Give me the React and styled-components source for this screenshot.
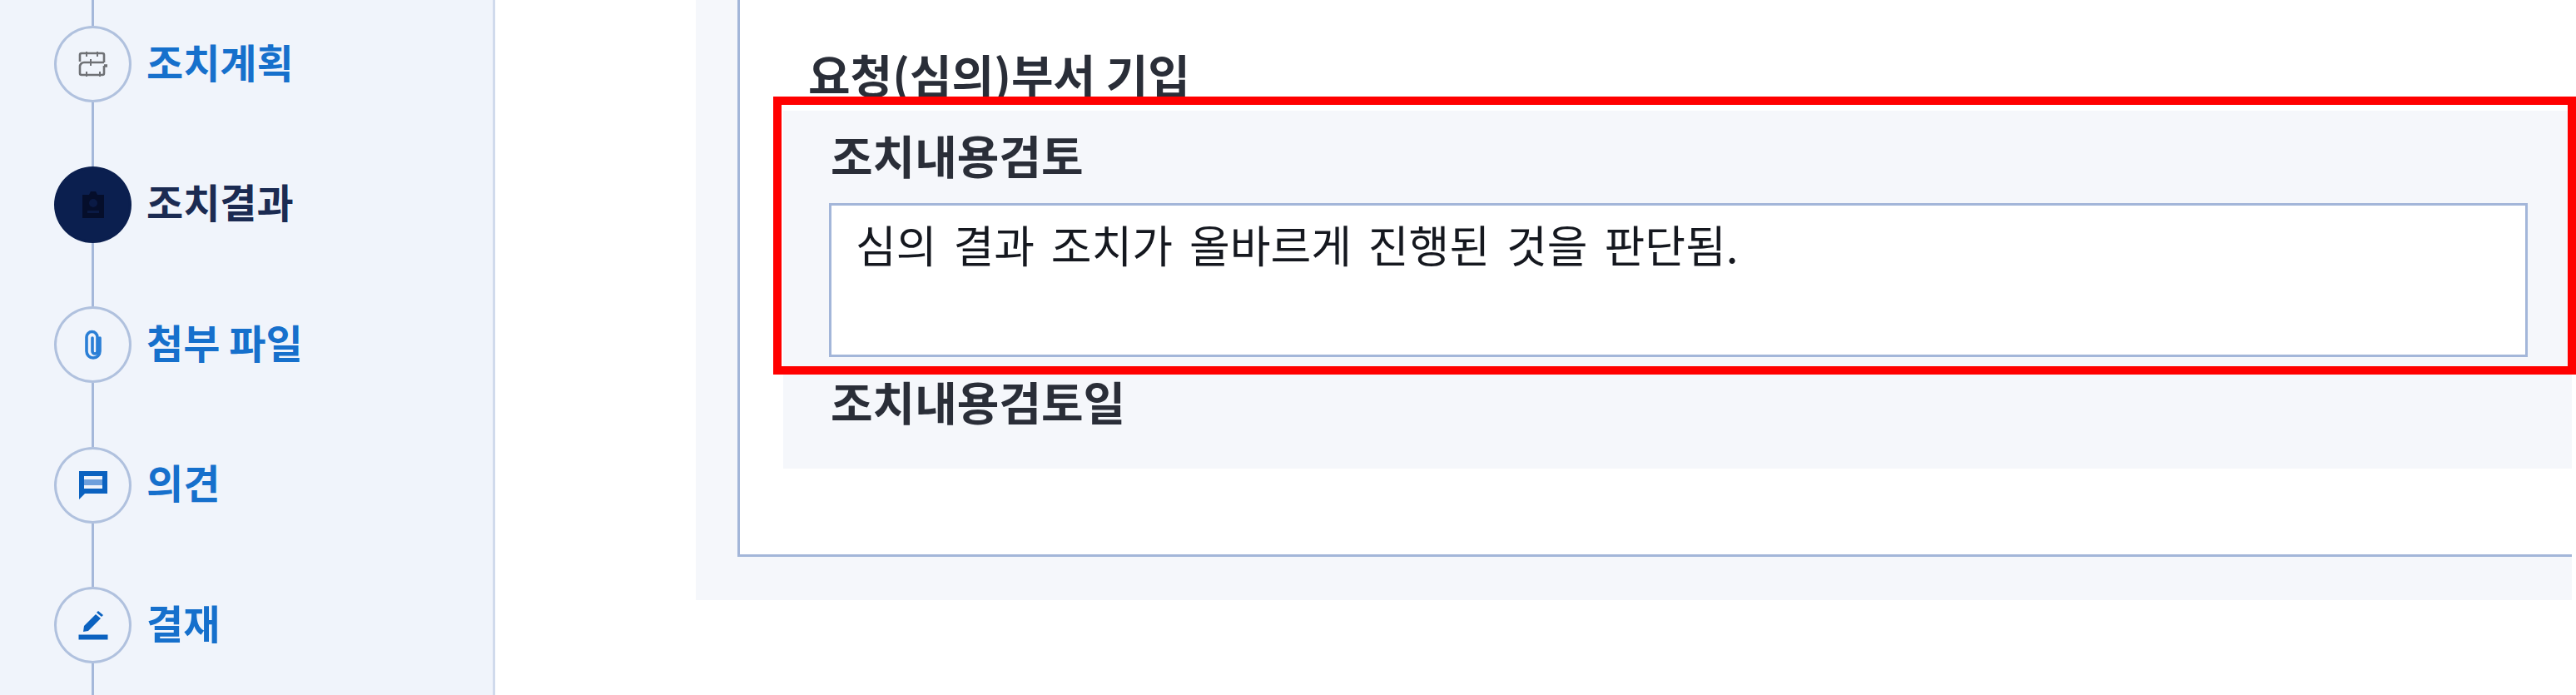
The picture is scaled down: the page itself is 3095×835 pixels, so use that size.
import React from "react";
import styled, { createGlobalStyle } from "styled-components";

const Global = createGlobalStyle`
  html, body { margin: 0; padding: 0; background: #fff; }
  body { font-family: "Noto Sans CJK KR", "Noto Sans", sans-serif; }
`;

const Page = styled.div`
  position: relative;
  display: flex;
  width: 3095px;
  height: 835px;
  overflow: hidden;
  background: #fff;
`;

const Sidebar = styled.aside`
  box-sizing: border-box;
  flex: 0 0 595px;
  height: 835px;
  padding-left: 65px;
  background: #f0f4fb;
  border-right: 3px solid #d0daec;
  display: flex;
  flex-direction: column;
  filter: blur(0.7px);
`;

const Connector = styled.div`
  flex: 0 0 ${(p) => p.$h}px;
  width: 3px;
  margin-left: 45px;
  background: #a5b8da;
`;

const Step = styled.div`
  flex: 0 0 92px;
  display: flex;
  align-items: center;
  gap: 18px;
`;

const Node = styled.div`
  box-sizing: border-box;
  flex: 0 0 93px;
  height: 92px;
  border-radius: 50%;
  border: 3px solid ${(p) => (p.$active ? "#0b1f4f" : "#b0c1de")};
  background: ${(p) => (p.$active ? "#0b1f4f" : "transparent")};
  display: flex;
  align-items: center;
  justify-content: center;
`;

const StepLabel = styled.span`
  font-size: 48px;
  font-weight: 700;
  line-height: 1;
  margin-top: -9px;
  white-space: nowrap;
  color: ${(p) => (p.$active ? "#1b2b52" : "#1670cc")};
`;

const Main = styled.main`
  flex: 1;
  min-width: 0;
  padding-left: 241px;
  padding-right: 5px;
  filter: blur(0.7px);
`;

const Panel = styled.section`
  height: 721px;
  padding-left: 50px;
  background: #f5f7fb;
`;

const Box = styled.div`
  box-sizing: border-box;
  height: 669px;
  padding-left: 52px;
  background: #fff;
  border-left: 3px solid #a3b6d9;
  border-bottom: 3px solid #a3b6d9;
`;

const Heading = styled.h2`
  margin: 0;
  height: 133px;
  padding: 56px 0 0 30px;
  box-sizing: border-box;
  font-size: 55px;
  font-weight: 700;
  line-height: 64px;
  color: #2a2e38;
  white-space: nowrap;
`;

const Section = styled.div`
  box-sizing: border-box;
  height: 430px;
  padding: 20px 51px 0 57px;
  background: #f5f7fb;
`;

const FieldLabel = styled.div`
  height: 91px;
  font-size: 55px;
  font-weight: 700;
  line-height: 64px;
  color: #2a2e38;
  white-space: nowrap;
`;

const Field = styled.div`
  box-sizing: border-box;
  height: 185px;
  margin: 0 2px 20px -2px;
  padding: 14px 29px;
  background: #fff;
  border: 3px solid #a3b6d9;
  font-size: 53px;
  line-height: 64px;
  word-spacing: 8px;
  color: #15181f;
  white-space: nowrap;
`;

const Highlight = styled.div`
  position: absolute;
  left: 929px;
  top: 116px;
  box-sizing: border-box;
  width: 2166px;
  height: 334px;
  border: 10px solid #ff0000;
  pointer-events: none;
`;

const FlowIcon = () => (
  <svg width="36" height="30" viewBox="0 0 36 30" fill="none" stroke="#6f7175" strokeWidth="2.600">
    <path d="M2 12V4a2 2 0 0 1 2-2h25a2 2 0 0 1 2 2v9" />
    <path d="M31 13H7a5 5 0 0 0-5 5v8a2 2 0 0 0 2 2h25a2 2 0 0 0 2-2v-9" />
    <path d="M10 0v6M23 0v6M15 9v8M26 24v6M10 24v6" strokeWidth="2" />
    <path d="M31 17h4" strokeWidth="3.500" />
  </svg>
);

const ClipboardIcon = () => (
  <svg width="28" height="32" viewBox="0 0 28 32" fill="#050e2b">
    <path d="M1 4h8l2-4h6l2 4h8v28H1z" />
    <circle cx="14" cy="14" r="5" fill="#0a1a45" />
    <rect x="7" y="23" width="14" height="3" fill="#0a1a45" />
  </svg>
);

const ClipIcon = () => (
  <svg width="22" height="36" viewBox="0 0 22 36" fill="none" stroke="#2b7fd6" strokeWidth="3.600" strokeLinecap="round">
    <path d="M19 10v16a8 8 0 0 1-8 8 8 8 0 0 1-8-8V9a6.500 6.500 0 0 1 13 0v17a3 3 0 0 1-6 0V10" />
  </svg>
);

const ChatIcon = () => (
  <svg width="36" height="35" viewBox="0 0 36 35">
    <path d="M1 1h34v27H8l-7 7z" fill="#0b62c0" />
    <rect x="7" y="7" width="22" height="15" fill="#f0f4fb" />
    <rect x="7" y="11" width="22" height="7" fill="#6d9fdc" />
  </svg>
);

const PenIcon = () => (
  <svg width="36" height="36" viewBox="0 0 36 36" fill="#0b62c0">
    <path d="M7 19 21 5l6 5-15 15-6 1z" />
    <path d="M24 1l6 5-2 2-6-5z" />
    <rect x="0.500" y="29.500" width="35" height="6" />
  </svg>
);

const steps = [
  { label: "조치계획", icon: <FlowIcon /> },
  { label: "조치결과", icon: <ClipboardIcon />, active: true },
  { label: "첨부 파일", icon: <ClipIcon /> },
  { label: "의견", icon: <ChatIcon /> },
  { label: "결재", icon: <PenIcon /> },
];

export default function App() {
  return (
    <Page>
      <Global />
      <Sidebar>
        <Connector $h={31} />
        {steps.map((s) => (
          <React.Fragment key={s.label}>
            <Step>
              <Node $active={s.active}>{s.icon}</Node>
              <StepLabel $active={s.active}>{s.label}</StepLabel>
            </Step>
            <Connector $h={76.5} />
          </React.Fragment>
        ))}
      </Sidebar>
      <Main>
        <Panel>
          <Box>
            <Heading>요청(심의)부서 기입</Heading>
            <Section>
              <FieldLabel>조치내용검토</FieldLabel>
              <Field>심의 결과 조치가 올바르게 진행된 것을 판단됨.</Field>
              <FieldLabel>조치내용검토일</FieldLabel>
            </Section>
          </Box>
        </Panel>
      </Main>
      <Highlight />
    </Page>
  );
}
